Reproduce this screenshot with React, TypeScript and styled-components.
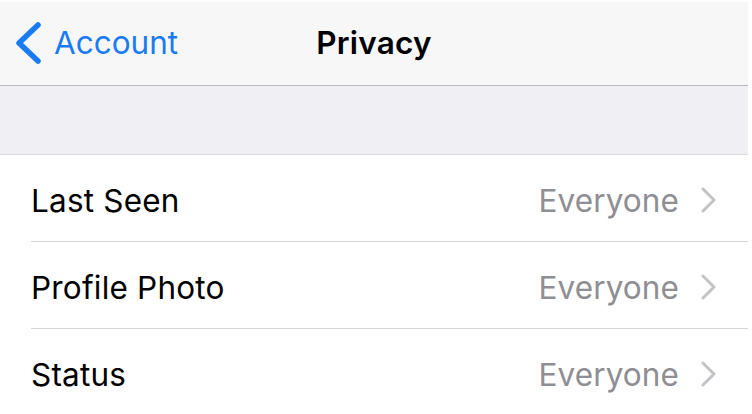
import React from 'react';
import styled, { createGlobalStyle } from 'styled-components';

const GlobalStyle = createGlobalStyle`
  html, body {
    margin: 0;
    padding: 0;
    background: #ffffff;
    font-family: Inter, "Liberation Sans", sans-serif;
  }
`;

const Screen = styled.div`
  width: 748px;
  padding-top: 2px;
  display: flex;
  flex-direction: column;
`;

const NavBar = styled.header`
  height: 83px;
  background: #f7f7f7;
  border-bottom: 1px solid #b9b9bd;
  display: grid;
  grid-template-columns: 1fr auto 1fr;
  align-items: center;
`;

const BackButton = styled.button`
  appearance: none;
  background: none;
  border: 0;
  padding: 0 0 2px 14px;
  display: flex;
  align-items: center;
  gap: 12px;
  color: #1a7cf5;
  font-family: inherit;
  font-size: 31.5px;
  justify-self: start;
  cursor: pointer;
`;

const Title = styled.h1`
  margin: 0 0 2px;
  font-size: 31.5px;
  font-weight: 600;
  color: #000;
  letter-spacing: 0.2px;
`;

const SectionGap = styled.div`
  height: 68px;
  background: #efeff4;
  border-bottom: 1px solid #dcdce0;
`;

const List = styled.ul`
  list-style: none;
  margin: 0;
  padding: 0;
`;

const Row = styled.li<{ $last?: boolean }>`
  position: relative;
  height: 87px;
  box-sizing: border-box;
  display: flex;
  align-items: center;
  padding: 3px 31px 0 31px;

  &::after {
    content: '';
    display: ${({ $last }) => ($last ? 'none' : 'block')};
    position: absolute;
    left: 31px;
    right: 0;
    bottom: 0;
    height: 1px;
    background: #d6d6da;
  }
`;

const Label = styled.span`
  flex: 1;
  font-size: 31.5px;
  color: #000;
  letter-spacing: 0.2px;
`;

const Value = styled.span`
  font-size: 31.5px;
  color: #8e8e93;
  margin-right: 22px;
  letter-spacing: 0.1px;
`;

const Disclosure = () => (
  <svg width="16" height="26" viewBox="0 0 16 26" fill="none">
    <path d="M2 2 L13 13 L2 24" stroke="#c4c4c8" strokeWidth="3" strokeLinecap="round" strokeLinejoin="round" />
  </svg>
);

const BackChevron = () => (
  <svg width="28" height="42" viewBox="0 0 28 42" fill="none">
    <path d="M24 3 L5 21 L24 39" stroke="#1a7cf5" strokeWidth="5.5" strokeLinecap="round" strokeLinejoin="round" />
  </svg>
);

const rows = [
  { label: 'Last Seen', value: 'Everyone' },
  { label: 'Profile Photo', value: 'Everyone' },
  { label: 'Status', value: 'Everyone' },
];

export default function App() {
  return (
    <>
      <GlobalStyle />
      <Screen>
        <NavBar>
          <BackButton>
            <BackChevron />
            Account
          </BackButton>
          <Title>Privacy</Title>
          <span />
        </NavBar>
        <SectionGap />
        <List>
          {rows.map((r, i) => (
            <Row key={r.label} $last={i === rows.length - 1}>
              <Label>{r.label}</Label>
              <Value>{r.value}</Value>
              <Disclosure />
            </Row>
          ))}
        </List>
      </Screen>
    </>
  );
}
